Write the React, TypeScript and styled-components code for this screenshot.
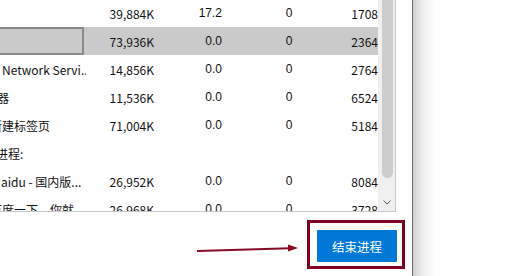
import React from "react";
import styled, { createGlobalStyle } from "styled-components";

const Global = createGlobalStyle`
  html, body { margin: 0; padding: 0; background: #fff; }
  body { width: 505px; height: 276px; overflow: hidden; font-family: "Noto Sans CJK SC", "Noto Sans", sans-serif; }
`;

const Page = styled.div`
  position: relative;
  display: flex;
  width: 505px;
  height: 276px;
  overflow: hidden;
`;

const Window = styled.div`
  width: 412px;
  height: 276px;
  background: #fff;
  border-right: 1px solid #6e6e6e;
  display: flex;
  flex-direction: column;
`;

const Shadow = styled.div`
  flex: 1;
  background: linear-gradient(to right, #d2d2d2 0px, #eeeeee 10px, #ffffff 22px);
`;

const ListBox = styled.div`
  width: 396px;
  height: 212px;
  box-sizing: border-box;
  border-right: 1px solid #c9c9c9;
  border-bottom: 1px solid #c9c9c9;
  display: flex;
  overflow: hidden;
`;

const Rows = styled.div`
  width: 378px;
  margin-top: -1px;
  display: flex;
  flex-direction: column;
  overflow: hidden;
`;

const Row = styled.div<{ $selected?: boolean }>`
  flex: none;
  height: 28px;
  display: grid;
  grid-template-columns: 86px 68px 80px 110px 34px;
  align-items: center;
  background: ${(p) => (p.$selected ? "#cacaca" : "transparent")};
  color: #111;
  font-size: 12px;
  white-space: nowrap;
`;

const NameCell = styled.div<{ $focus?: boolean }>`
  height: 100%;
  box-sizing: border-box;
  overflow: hidden;
  display: flex;
  align-items: center;
  border: ${(p) => (p.$focus ? "2px solid #8a8a8a" : "none")};
  border-left: none;
  width: ${(p) => (p.$focus ? "84px" : "86px")};
`;

const NameText = styled.span<{ $shift: number }>`
  flex: none;
  margin-left: ${(p) => p.$shift}px;
  font-family: "Noto Sans CJK SC", "Noto Sans", sans-serif;
`;

const Mem = styled.div`
  text-align: right;
  font-family: "Noto Sans CJK SC", "Noto Sans", sans-serif;
`;

const Cpu = styled.div`
  text-align: right;
  padding-right: 12px;
  font-family: "Liberation Sans", Arial, sans-serif;
`;

const Disk = styled.div`
  text-align: center;
  font-family: "Liberation Sans", Arial, sans-serif;
`;

const Pid = styled.div`
  text-align: right;
  font-family: "Noto Sans CJK SC", "Noto Sans", sans-serif;
`;

const Scrollbar = styled.div`
  width: 17px;
  background: #f0f0f0;
  position: relative;
  display: flex;
  flex-direction: column;
  align-items: center;
`;

const Thumb = styled.div`
  width: 11px;
  height: 178px;
  margin-left: 1px;
  background: #cdcdcd;
  border-radius: 0 0 6px 6px;
`;

const Chevron = styled.svg`
  margin-top: 22px;
  margin-left: 1px;
`;

const Footer = styled.div`
  display: flex;
  justify-content: flex-end;
  padding: 18px 15px 0 0;
`;

const EndButton = styled.button`
  width: 80px;
  height: 32px;
  border: none;
  border-radius: 1px;
  background: #0078d7;
  color: #fff;
  font-family: "Noto Sans CJK SC", sans-serif;
  font-size: 12.5px;
  padding: 0;
`;

const Highlight = styled.div`
  position: absolute;
  left: 307px;
  top: 220px;
  width: 98px;
  height: 49px;
  box-sizing: border-box;
  border: 3px solid #800020;
  pointer-events: none;
`;

const Arrow = styled.svg`
  position: absolute;
  left: 190px;
  top: 238px;
`;

type Proc = {
  name: string;
  shift: number;
  mem?: string;
  cpu?: string;
  disk?: string;
  pid?: string;
  selected?: boolean;
};

const procs: Proc[] = [
  { name: "", shift: 0, mem: "39,884K", cpu: "17.2", disk: "0", pid: "1708" },
  { name: "", shift: 0, mem: "73,936K", cpu: "0.0", disk: "0", pid: "2364", selected: true },
  { name: "Network Servi...", shift: 2, mem: "14,856K", cpu: "0.0", disk: "0", pid: "2764" },
  { name: "器", shift: -3, mem: "11,536K", cpu: "0.0", disk: "0", pid: "6524" },
  { name: "新建标签页", shift: -10, mem: "71,004K", cpu: "0.0", disk: "0", pid: "5184" },
  { name: "进程:", shift: -4 },
  { name: "aidu - 国内版...", shift: 1, mem: "26,952K", cpu: "0.0", disk: "0", pid: "8084" },
  { name: "百度一下，你就", shift: -10, mem: "26,968K", cpu: "0.0", disk: "0", pid: "3728" },
];

export default function App() {
  return (
    <Page>
      <Global />
      <Window>
        <ListBox>
          <Rows>
            {procs.map((p, i) => (
              <Row key={i} $selected={p.selected}>
                <NameCell $focus={p.selected}>
                  <NameText $shift={p.shift}>{p.name}</NameText>
                </NameCell>
                <Mem>{p.mem}</Mem>
                <Cpu>{p.cpu}</Cpu>
                <Disk>{p.disk}</Disk>
                <Pid>{p.pid}</Pid>
              </Row>
            ))}
          </Rows>
          <Scrollbar>
            <Thumb />
            <Chevron width="8" height="5" viewBox="0 0 8 5">
              <path d="M0.5 0.5 L4 4 L7.5 0.5" fill="none" stroke="#555" strokeWidth="1" />
            </Chevron>
          </Scrollbar>
        </ListBox>
        <Footer>
          <EndButton>结束进程</EndButton>
        </Footer>
      </Window>
      <Shadow />
      <Highlight />
      <Arrow width="112" height="20" viewBox="0 0 112 20">
        <line x1="7" y1="13" x2="100" y2="10.2" stroke="#860b25" strokeWidth="2" />
        <path d="M98 6.5 L108 10 L98 13.5 Z" fill="#860b25" />
      </Arrow>
    </Page>
  );
}
